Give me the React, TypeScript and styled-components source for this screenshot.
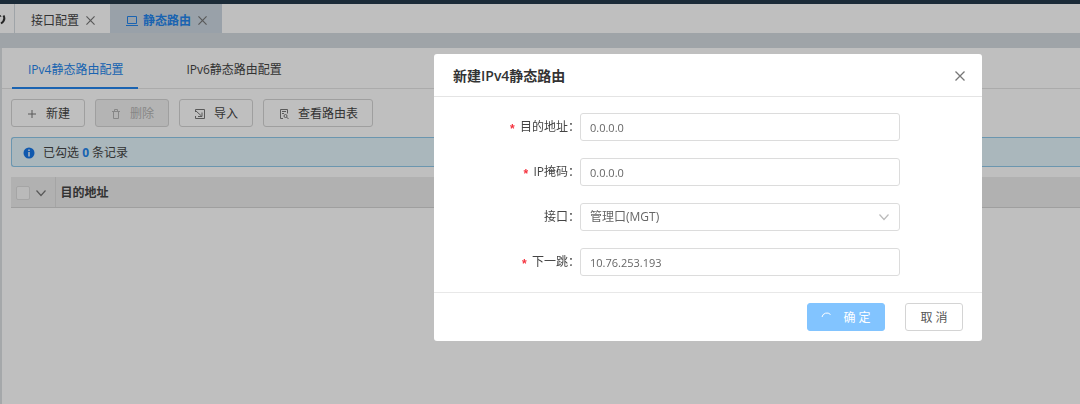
import React from "react";
import styled, { createGlobalStyle, css } from "styled-components";

const GlobalStyle = createGlobalStyle`
  * { box-sizing: border-box; }
  html, body, #root { height: 100%; }
  body {
    margin: 0;
    overflow: hidden;
    background: #fff;
    color: #444;
    font: 12px/20px "Open Sans", "Noto Sans CJK SC", sans-serif;
  }
  button, input, select { font: inherit; color: inherit; margin: 0; }
  svg { display: block; flex: none; }
`;

const Page = styled.div`
  display: flex;
  flex-direction: column;
  min-height: 100%;
`;
const TopBar = styled.header`
  height: 4px;
  background: #253a4b;
`;
const PageTabs = styled.nav`
  display: flex;
  height: 29px;
`;
const MenuToggle = styled.button`
  display: flex;
  align-items: center;
  width: 15px;
  padding: 0;
  border: 0;
  border-right: 1px solid #d4dbe0;
  background: #fff;
  color: #333;
`;
const PageTab = styled.div<{ $active?: boolean }>`
  display: flex;
  align-items: center;
  gap: 7px;
  padding: 4px 15px 0 16px;
  color: ${(p) => (p.$active ? "#2385ec" : "#444")};
  background: ${(p) => (p.$active ? "#ccd7e2" : "#fff")};
  font-weight: ${(p) => (p.$active ? 700 : 400)};
`;
const TabLink = styled.a`
  display: flex;
  align-items: center;
  gap: 5px;
  color: inherit;
  text-decoration: none;
`;
const IconButton = styled.button`
  display: flex;
  padding: 0;
  border: 0;
  background: none;
  color: #777;
`;
const Content = styled.main`
  flex: 1;
  border-top: 15px solid #d4dbe0;
  padding-left: 2px;
  background: linear-gradient(to right, #dce0e3 2px, #fff 2px);
`;
const SubTabs = styled.div`
  display: flex;
  gap: 32px;
  height: 41px;
  padding-left: 10px;
  border-bottom: 1px solid #e4e4e4;
`;
const SubTab = styled.button<{ $active?: boolean }>`
  height: 41px;
  padding: 4px 15px 0 16px;
  border: 0;
  border-bottom: 2px solid ${(p) => (p.$active ? "#2385ec" : "transparent")};
  background: none;
  color: ${(p) => (p.$active ? "#2385ec" : "#444")};
`;
const Section = styled.section`
  display: flex;
  flex-direction: column;
  gap: 10px;
  padding: 10px 0 0 9px;
`;
const Toolbar = styled.div`
  display: flex;
  gap: 10px;
`;
const buttonBase = css`
  display: flex;
  align-items: center;
  justify-content: center;
  height: 28px;
  border: 1px solid #d4d4d4;
  border-radius: 3px;
  background: #fff;
`;
const ToolButton = styled.button`
  ${buttonBase}
  gap: 8px;
  padding: 2px 14px 0;
  svg { color: #777; }
  &:disabled {
    background: #f0f0f0;
    color: #b4b4b4;
    svg { color: #b4b4b4; }
  }
`;
const Notice = styled.div`
  display: flex;
  align-items: center;
  gap: 8px;
  height: 30px;
  padding: 2px 0 0 11px;
  border: 1px solid #8fc8ea;
  border-right: 0;
  border-radius: 3px 0 0 3px;
  background: #e3f4fb;
  b { color: #2385ec; }
`;
const Table = styled.table`
  width: 100%;
  border-collapse: collapse;
  background: #ededed;
  th {
    height: 30px;
    padding: 2px 5px 0;
    border-bottom: 1px solid #d4d4d4;
    text-align: left;
    color: #444;
  }
  th:first-child {
    width: 44px;
    border-right: 1px solid #dcdcdc;
  }
`;
const SelectAll = styled.div`
  display: flex;
  align-items: center;
  gap: 6px;
`;
const Checkbox = styled.input`
  appearance: none;
  width: 14px;
  height: 14px;
  border: 1px solid #dcdcdc;
  border-radius: 2px;
  background: #f8f8f8;
`;
const Mask = styled.div`
  position: fixed;
  inset: 0;
  display: flex;
  align-items: flex-start;
  justify-content: flex-end;
  padding: 54px 98px 0 0;
  background: rgba(0, 0, 0, 0.25);
`;
const Dialog = styled.div`
  width: 548px;
  border-radius: 3px;
  background: #fff;
`;
const DialogHeader = styled.div`
  display: flex;
  align-items: center;
  justify-content: space-between;
  height: 43px;
  padding: 2px 17px 0 19px;
  border-bottom: 1px solid #e4e4e4;
`;
const DialogTitle = styled.h2`
  margin: 0;
  color: #333;
  font-size: 14px;
  font-weight: 600;
`;
const Form = styled.form`
  display: flex;
  flex-direction: column;
  gap: 17px;
  padding: 16px 82px 16px 0;
`;
const Field = styled.div`
  display: grid;
  grid-template-columns: 1fr 320px;
  align-items: center;
`;
const Label = styled.label<{ $required?: boolean }>`
  text-align: right;
  ${(p) =>
    p.$required &&
    css`
      &::before {
        content: "*";
        margin-right: 4px;
        color: #f5333f;
        font-family: "Liberation Mono", monospace;
        font-weight: 700;
        vertical-align: -2px;
        line-height: 1;
      }
    `}
`;
const fieldBase = css`
  width: 100%;
  height: 28px;
  padding: 0 9px;
  border: 1px solid #dcdcdc;
  border-radius: 3px;
  background: #fff;
  color: #666;
  outline: none;
`;
const TextInput = styled.input`
  ${fieldBase}
  && { font-size: 11px; }
`;
const SelectBox = styled.div`
  display: grid;
  align-items: center;
  > * { grid-area: 1 / 1; }
  svg {
    justify-self: end;
    margin-right: 11px;
    color: #bbb;
    pointer-events: none;
  }
`;
const Select = styled.select`
  ${fieldBase}
  appearance: none;
`;
const DialogFooter = styled.div`
  display: flex;
  justify-content: flex-end;
  gap: 20px;
  padding: 10px 19px;
  border-top: 1px solid #e8e8e8;
`;
const FooterButton = styled.button<{ $primary?: boolean }>`
  ${buttonBase}
  gap: 10px;
  padding: 2px 0 0;
  width: ${(p) => (p.$primary ? 78 : 58)}px;
  color: #555;
  ${(p) =>
    p.$primary &&
    css`
      border-color: #82c4ff;
      background: #82c4ff;
      color: #fff;
    `}
`;

const Close = ({ size = 9 }: { size?: number }) => (
  <svg width={size} height={size} viewBox="0 0 10 10" fill="none" stroke="currentColor" strokeWidth="1.3">
    <path d="M.5.5l9 9M9.5.5l-9 9" />
  </svg>
);
const Chevron = () => (
  <svg width="10" height="10" viewBox="0 0 10 10" fill="none" stroke="currentColor" strokeWidth="1.2">
    <path d="M.5 2.5L5 7.5l4.500-5" />
  </svg>
);
const ToolIcon = ({ d }: { d: string }) => (
  <svg width="12" height="12" viewBox="0 0 12 12" fill="none" stroke="currentColor">
    <path d={d} />
  </svg>
);

export default function App() {
  return (
    <>
      <GlobalStyle />
      <Page>
        <TopBar />
        <PageTabs>
          <MenuToggle aria-label="菜单">
            <svg width="6" height="14" viewBox="0 0 6 14" fill="none" stroke="currentColor">
              <path d="M0 3l1 2" />
              <path d="M3.500 3.500Q6 8 1 11.500" strokeWidth="2" />
            </svg>
          </MenuToggle>
          <PageTab>
            <TabLink href="#interface">接口配置</TabLink>
            <IconButton aria-label="关闭接口配置"><Close /></IconButton>
          </PageTab>
          <PageTab $active>
            <TabLink href="#route">
              <svg width="12" height="12" viewBox="0 0 12 12" fill="none" stroke="currentColor">
                <path d="M1.500 1.500h9v7h-9zM0 10.500h12" />
              </svg>
              静态路由
            </TabLink>
            <IconButton aria-label="关闭静态路由"><Close /></IconButton>
          </PageTab>
        </PageTabs>
        <Content>
          <SubTabs role="tablist">
            <SubTab role="tab" aria-selected $active>IPv4静态路由配置</SubTab>
            <SubTab role="tab" aria-selected={false}>IPv6静态路由配置</SubTab>
          </SubTabs>
          <Section>
            <Toolbar>
              <ToolButton><ToolIcon d="M6 2v8M2 6h8" />新建</ToolButton>
              <ToolButton disabled><ToolIcon d="M2 3.500h8M3.500 3.500v7h5v-7M4.500 3.500v-2h3v2" />删除</ToolButton>
              <ToolButton><ToolIcon d="M1.500 4V1.500h9v9h-9V8M2 3l5.500 5M8 4.500v4H4" />导入</ToolButton>
              <ToolButton>
                <ToolIcon d="M5 10.500H2.500V1.500h7v4M4 3.500h4M4 5.500h2M9 8a1.500 1.500 0 1 1-3 0a1.500 1.500 0 0 1 3 0M8.500 9L10.500 11" />
                查看路由表
              </ToolButton>
            </Toolbar>
            <Notice>
              <svg width="12" height="12" viewBox="0 0 12 12">
                <circle cx="6" cy="6" r="5.500" fill="#1677e8" />
                <path d="M6 2.500v1.500M6 5v4.500" stroke="#fff" strokeWidth="1.4" />
              </svg>
              <span>已勾选 <b>0</b> 条记录</span>
            </Notice>
            <Table>
              <thead>
                <tr>
                  <th>
                    <SelectAll>
                      <Checkbox type="checkbox" aria-label="全选" />
                      <IconButton aria-label="选择选项"><Chevron /></IconButton>
                    </SelectAll>
                  </th>
                  <th>目的地址</th>
                </tr>
              </thead>
            </Table>
          </Section>
        </Content>
      </Page>
      <Mask>
        <Dialog role="dialog" aria-modal="true" aria-labelledby="dialog-title">
          <DialogHeader>
            <DialogTitle id="dialog-title">新建IPv4静态路由</DialogTitle>
            <IconButton aria-label="关闭"><Close size={10} /></IconButton>
          </DialogHeader>
          <Form id="route-form">
            <Field>
              <Label $required htmlFor="destination">目的地址：</Label>
              <TextInput id="destination" defaultValue="0.0.0.0" />
            </Field>
            <Field>
              <Label $required htmlFor="mask">IP掩码：</Label>
              <TextInput id="mask" defaultValue="0.0.0.0" />
            </Field>
            <Field>
              <Label htmlFor="port">接口：</Label>
              <SelectBox>
                <Select id="port"><option>管理口(MGT)</option></Select>
                <Chevron />
              </SelectBox>
            </Field>
            <Field>
              <Label $required htmlFor="next-hop">下一跳：</Label>
              <TextInput id="next-hop" defaultValue="10.76.253.193" />
            </Field>
          </Form>
          <DialogFooter>
            <FooterButton $primary type="submit" form="route-form">
              <svg width="12" height="12" viewBox="0 0 12 12" fill="none" stroke="currentColor">
                <path d="M1 5A5 5 0 0 1 9.500 2.500" />
              </svg>
              确 定
            </FooterButton>
            <FooterButton type="button">取 消</FooterButton>
          </DialogFooter>
        </Dialog>
      </Mask>
    </>
  );
}
